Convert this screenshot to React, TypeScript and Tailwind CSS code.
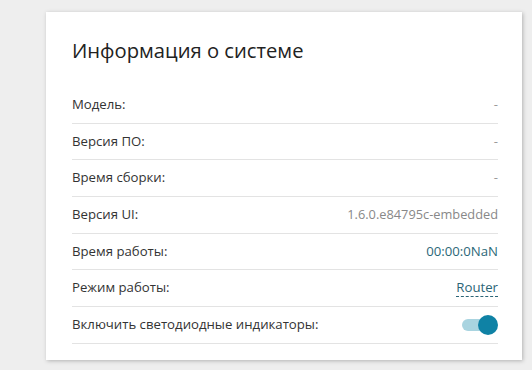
import React from 'react';

const ROWS: { label: string; value: string; kind: 'dash' | 'muted' | 'teal' | 'link' | 'toggle' }[] = [
  { label: 'Модель:', value: '-', kind: 'dash' },
  { label: 'Версия ПО:', value: '-', kind: 'dash' },
  { label: 'Время сборки:', value: '-', kind: 'dash' },
  { label: 'Версия UI:', value: '1.6.0.e84795c-embedded', kind: 'muted' },
  { label: 'Время работы:', value: '00:00:0NaN', kind: 'teal' },
  { label: 'Режим работы:', value: 'Router', kind: 'link' },
  { label: 'Включить светодиодные индикаторы:', value: '', kind: 'toggle' },
];

const Toggle: React.FC = () => (
  <div className="relative w-[36px] h-[20px]">
    <div className="absolute left-0 top-[4px] w-[30px] h-[12px] rounded-full bg-[#a9d4e0]" />
    <div className="absolute right-0 top-0 w-[20px] h-[20px] rounded-full bg-[#0f82a5]" />
  </div>
);

const App: React.FC = () => {
  return (
    <div
      className="min-h-[370px] w-[532px] bg-[#eeeeee] pt-[12px] pl-[46px]"
      style={{ fontFamily: '"Open Sans", "DejaVu Sans", sans-serif' }}
    >
      <div className="w-[476px] bg-white shadow-[1px_1px_4px_rgba(0,0,0,0.25)] pt-[24px] pl-[26px] pr-[24px] pb-[16px]">
        <h2 className="text-[20.2px] leading-[28px] text-[#222222] mb-[23px]">Информация о системе</h2>
        <div>
          {ROWS.map((row) => (
            <div
              key={row.label}
              className="h-[36.67px] flex items-center justify-between border-b border-[#e3e3e3] text-[13.2px]"
            >
              <span className="text-[#333333]">{row.label}</span>
              {row.kind === 'dash' && <span className="text-[#999999]">{row.value}</span>}
              {row.kind === 'muted' && <span className="text-[#888888] text-[12.8px]">{row.value}</span>}
              {row.kind === 'teal' && <span className="text-[#2b6878]">{row.value}</span>}
              {row.kind === 'link' && (
                <span className="text-[#2b6576] border-b border-dashed border-[#2b6576] leading-[17px]">
                  {row.value}
                </span>
              )}
              {row.kind === 'toggle' && <Toggle />}
            </div>
          ))}
        </div>
      </div>
    </div>
  );
};

export default App;
